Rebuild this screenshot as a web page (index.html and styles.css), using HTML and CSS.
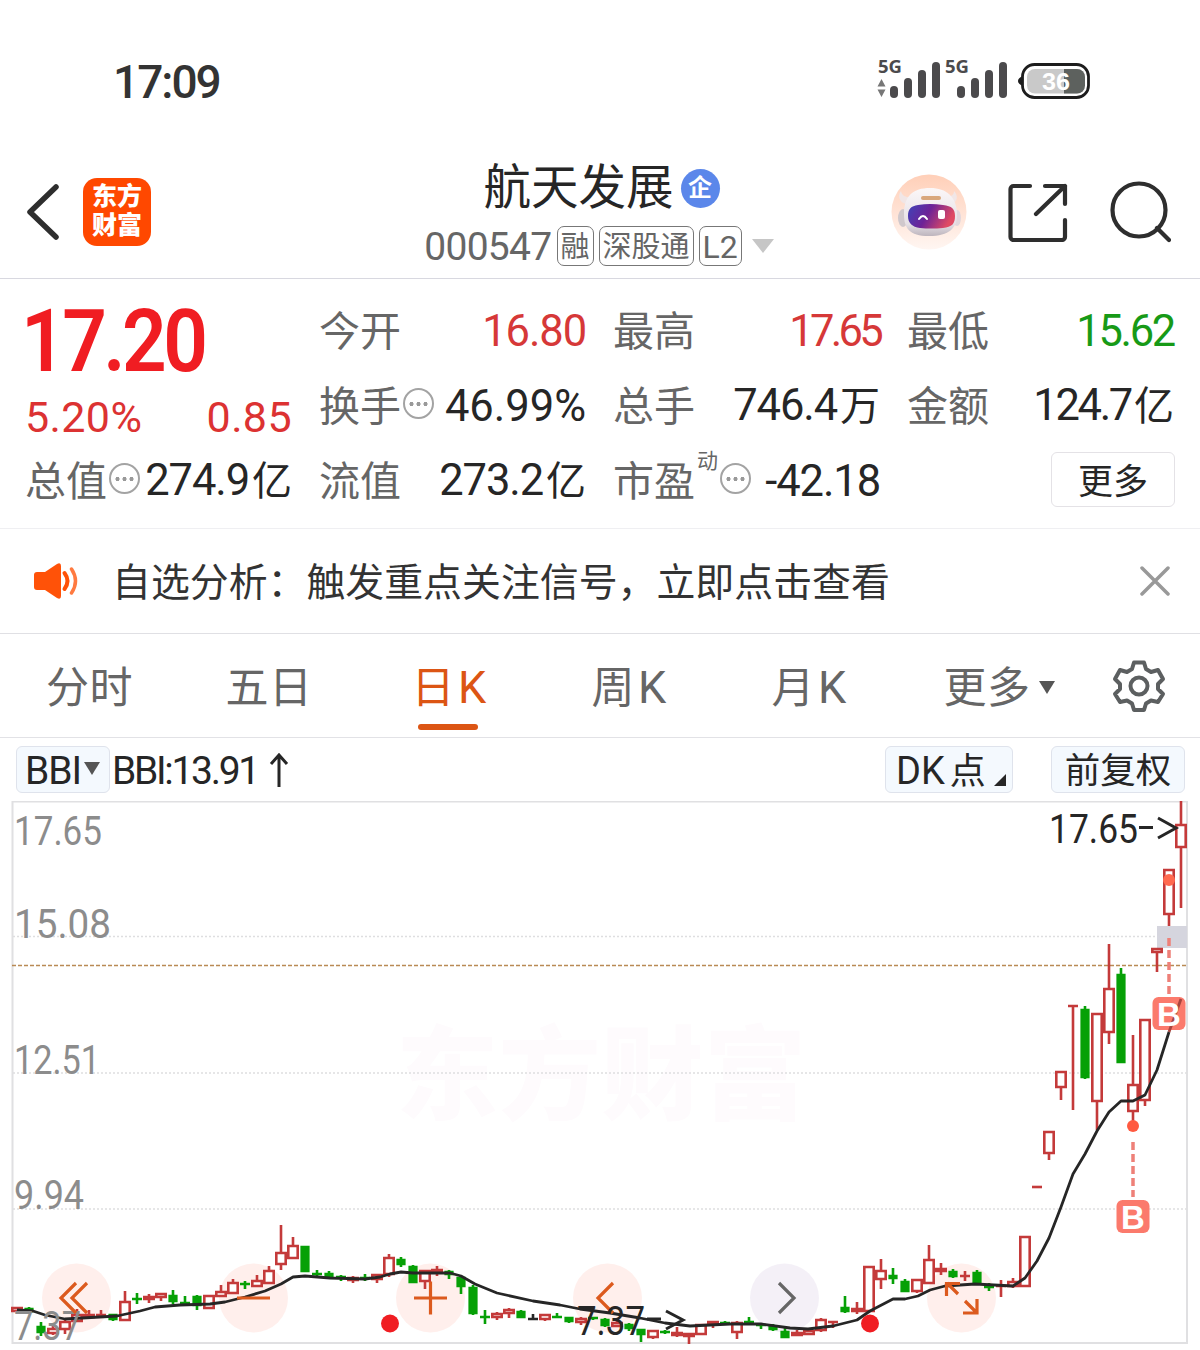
FILE: index.html
```html
<!DOCTYPE html>
<html lang="zh-CN">
<head>
    <meta charset="UTF-8">
    <meta name="viewport" content="width=device-width, initial-scale=1.0">
    <title>航天发展 000547</title>
    <link rel="stylesheet" href="styles.css">
</head>
<body>

<div class="status-bar">
    <span class="clock">17:09</span>
    <svg class="status-icons" width="220" height="50" viewBox="0 0 220 50">
        <g fill="#4b4a4c">
            <text x="8" y="23" class="net" textLength="24" lengthAdjust="spacingAndGlyphs">5G</text>
            <text x="75" y="23" class="net" textLength="24" lengthAdjust="spacingAndGlyphs">5G</text>
            <path d="M11.500 29l4 7.500h-8zM11.500 47l4-7.500h-8z" fill="#777"/>
            <rect x="20" y="36" width="8" height="12" rx="4"/>
            <rect x="34" y="28" width="8" height="20" rx="4"/>
            <rect x="48" y="20" width="8" height="28" rx="4"/>
            <rect x="62" y="12" width="8" height="36" rx="4"/>
            <rect x="87" y="36" width="8" height="12" rx="4"/>
            <rect x="101" y="28" width="8" height="20" rx="4"/>
            <rect x="115" y="20" width="8" height="28" rx="4"/>
            <rect x="129" y="12" width="8" height="36" rx="4"/>
        </g>
        <path d="M153 26q-5 2-5 5t5 5z" fill="#1d1d1d"/>
        <rect x="152.500" y="14.500" width="66" height="33" rx="12" fill="#fff" stroke="#1d1d1d" stroke-width="2.800"/>
        <rect x="157" y="19" width="58" height="24.500" rx="8" fill="#c9c9c9"/>
        <path d="M194 19h13a8 8 0 0 1 8 8v8.500a8 8 0 0 1-8 8h-13z" fill="#5d615e"/>
        <text x="172" y="39.500" class="battery" textLength="28" lengthAdjust="spacingAndGlyphs">36</text>
    </svg>
</div>

<header class="header">
    <div class="header-left">
        <svg width="36" height="60" viewBox="0 0 36 60">
            <path d="M32 5L6 30l26 25" fill="none" stroke="#2e2e2e" stroke-width="5.500" stroke-linecap="round" stroke-linejoin="round"/>
        </svg>
        <div class="logo"><span>东方</span><span>财富</span></div>
    </div>
    <div class="header-title">
        <div class="stock-name">航天发展<span class="badge">企</span></div>
        <div class="stock-code">
            <span class="code">000547</span>
            <span class="tag">融</span>
            <span class="tag tag-long">深股通</span>
            <span class="tag">L2</span>
            <span class="drop"></span>
        </div>
    </div>
    <div class="header-right">
        <svg width="76" height="76" viewBox="0 0 76 76">
            <defs>
                <linearGradient id="bg" x1="0" y1="0" x2="0" y2="1"><stop offset="0" stop-color="#ffcfb8"/><stop offset="1" stop-color="#fff6f2"/></linearGradient>
                <linearGradient id="visor" x1="0" y1="0" x2="1" y2=".3"><stop offset="0" stop-color="#3f43b8"/><stop offset=".5" stop-color="#6d2297"/><stop offset="1" stop-color="#e04a63"/></linearGradient>
                <linearGradient id="helmet" x1="0" y1="0" x2="0" y2="1"><stop offset="0" stop-color="#fbf7f8"/><stop offset=".75" stop-color="#e6e0e5"/><stop offset="1" stop-color="#bdb5bd"/></linearGradient>
            </defs>
            <circle cx="38" cy="38" r="37.500" fill="url(#bg)"/>
            <path d="M10 17c-4 5-1 12 5 13l6-7c-6 1-10-1-11-6zM63 17c5 5 3 12-3 13l-6-7c6 0 9-2 9-6z" fill="#f1e6e6"/>
            <ellipse cx="12" cy="44" rx="5" ry="9" fill="#d0c8cc"/>
            <ellipse cx="66" cy="44" rx="4" ry="8" fill="#e2d7dc"/>
            <path d="M13 40C13 22 22 14 39 14s26 9 27 25c1 15-8 23-28 23S13 54 13 40z" fill="url(#helmet)"/>
            <rect x="30" y="22" width="20" height="4" rx="2" fill="#d9a77c"/>
            <path d="M27 31q12-2 25 0c9 1 12 4 12 11 0 8-3 11-12 12q-12 1-23 0c-8-1-12-5-12-12s3-10 10-11z" fill="url(#visor)"/>
            <path d="M28 45q4-6 8 0" fill="none" stroke="#fff" stroke-width="2" stroke-linecap="round"/>
            <rect x="47" y="36" width="7" height="9" rx="2" fill="#fff"/>
        </svg>
        <svg width="60" height="60" viewBox="0 0 60 60" fill="none" stroke="#2e2e2e" stroke-width="4.200" stroke-linecap="round" stroke-linejoin="round">
            <path d="M22 4H5.500a3 3 0 0 0-3 3v48a3 3 0 0 0 3 3H54a3 3 0 0 0 3-3V38M37 4h20v18M57 4L28 32"/>
        </svg>
        <svg width="62" height="62" viewBox="0 0 62 62" fill="none" stroke="#2e2e2e" stroke-width="4.200" stroke-linecap="round">
            <circle cx="30" cy="29" r="26.500"/>
            <path d="M48 47l12 12"/>
        </svg>
    </div>
</header>

<section class="quote">
    <div class="price-box">
        <div class="price">17.20</div>
        <div class="change"><span>5.20%</span><span>0.85</span></div>
    </div>
    <div class="stat"><span class="label">今开</span><span class="value red">16.80</span></div>
    <div class="stat"><span class="label">最高</span><span class="value red kern">17.65</span></div>
    <div class="stat"><span class="label">最低</span><span class="value green tight">15.62</span></div>
    <div class="stat"><span class="label">换手</span><span class="info"></span><span class="value wide">46.99%</span></div>
    <div class="stat"><span class="label">总手</span><span class="value">746.4<i>万</i></span></div>
    <div class="stat"><span class="label">金额</span><span class="value tight">124.7<i>亿</i></span></div>
    <div class="stat"><span class="label">总值</span><span class="info"></span><span class="value">274.9<i>亿</i></span></div>
    <div class="stat"><span class="label">流值</span><span class="value">273.2<i>亿</i></span></div>
    <div class="stat"><span class="label">市盈</span><sup>动</sup><span class="info"></span><span class="value">-42.18</span></div>
    <div class="stat"><button class="more-btn">更多</button></div>
</section>

<div class="notice">
    <svg width="46" height="40" viewBox="0 0 46 40">
        <path d="M1 14q0-3 3-3h8L24 3q4-2 4 2v30q0 4-4 2l-12-8H4q-3 0-3-3z" fill="#ff5208"/>
        <path d="M31.500 12q6 8 0 16" fill="none" stroke="#ff5208" stroke-width="4" stroke-linecap="round"/>
        <path d="M38.500 8q8 12 0 24" fill="none" stroke="#ff7a40" stroke-width="3.500" stroke-linecap="round"/>
    </svg>
    <span class="notice-text">自选分析：触发重点关注信号，立即点击查看</span>
    <svg width="30" height="30" viewBox="0 0 30 30">
        <path d="M2 2l26 26M28 2L2 28" stroke="#999" stroke-width="3.500" stroke-linecap="round"/>
    </svg>
</div>

<nav class="tabs">
    <span class="tab">分时</span>
    <span class="tab">五日</span>
    <span class="tab active">日<i>K</i></span>
    <span class="tab">周<i>K</i></span>
    <span class="tab">月<i>K</i></span>
    <span class="tab tab-more">更多<b class="caret"></b></span>
    <svg class="gear" width="54" height="54" viewBox="0 0 54 54" fill="none" stroke="#5c5f60" stroke-width="4" stroke-linejoin="round">
        <path d="M22 3.500h10l2 6.500 5 3 7-2 5 9-5 5v5l5 5-5 8-7-1.500-5 3-2 6.500H22l-2-6.500-5-3-7 1.500-5-8 5-5v-5l-5-5 5-9 7 2 5-3z"/>
        <circle cx="27" cy="27" r="8.500"/>
    </svg>
</nav>

<div class="toolbar">
    <span class="chip bbi">BBI<b class="caret"></b></span>
    <span class="bbi-value">BBI:13.91<svg width="20" height="36" viewBox="0 0 20 36"><path d="M10 34V3M2 11l8-9 8 9" fill="none" stroke="#262626" stroke-width="3"/></svg></span>
    <span class="chip dk">DK<i>点</i><b class="corner"></b></span>
    <span class="chip fq">前复权</span>
</div>

<svg class="chart" id="chart" width="1200" height="549" viewBox="0 801 1200 549">
    <text class="watermark" x="396" y="1112" textLength="410">东方财富</text>
    <g class="frame">
        <path d="M12.500 801.500H1187V1343H12.500z"/>
        <path class="dots" d="M13 936.500H1187M13 1073H1187M13 1209H1187"/>
        <path class="cost" d="M12 965.500H1187"/>
    </g>
    <rect x="1157" y="926" width="30" height="22" fill="#d5d5de"/>

    <g class="round-buttons">
        <circle cx="76.500" cy="1298" r="34.500"/>
        <circle cx="253.500" cy="1298" r="34.500"/>
        <circle cx="430.500" cy="1298" r="34.500"/>
        <circle cx="607.500" cy="1298" r="34.500"/>
        <circle class="gray" cx="784.500" cy="1298" r="34.500"/>
        <circle cx="961.500" cy="1298" r="34.500"/>
    </g>

    <g id="candles"></g>

    <g id="signals">
        <path class="signal-line" d="M1169 938V994M1133 1142V1197"/>
        <circle cx="1169" cy="880" r="6" fill="#ff6a50"/>
        <circle cx="1133" cy="1126" r="6" fill="#ff5a40"/>
        <rect x="1152.500" y="997" width="33" height="33" rx="6" fill="#fb7a6c"/>
        <rect x="1116.500" y="1200" width="33" height="33" rx="6" fill="#fb7a6c"/>
        <path class="bbi-fade" d="M1169 1032L1181 999"/>
        <text class="b" x="1169" y="1025.500">B</text>
        <text class="b" x="1133" y="1228.500">B</text>
    </g>

    <path id="bbi" class="bbi-line"/>
    <circle cx="390" cy="1323.500" r="9" fill="#f01d22"/>
    <circle cx="870" cy="1323.500" r="9" fill="#f01d22"/>

    <g class="axis">
        <text x="14" y="845" textLength="88" lengthAdjust="spacingAndGlyphs">17.65</text>
        <text x="14" y="938" textLength="97" lengthAdjust="spacingAndGlyphs">15.08</text>
        <text x="14" y="1074" textLength="86" lengthAdjust="spacingAndGlyphs">12.51</text>
        <text x="14" y="1209" textLength="70" lengthAdjust="spacingAndGlyphs">9.94</text>
        <text x="14" y="1340" textLength="67" lengthAdjust="spacingAndGlyphs">7.37</text>
    </g>
    <g class="round-icons">
        <path d="M76 1283L61 1298l15 15M87 1283L72 1298l15 15"/>
        <path d="M237 1298h33"/>
        <path d="M414 1298h33M430.500 1281.500v33"/>
        <path d="M613 1283l-15 15 15 15"/>
        <path class="gray" d="M779 1283l15 15-15 15"/>
        <path d="M958 1294l-11-11M946.500 1296v-12.500H960M965 1301l11 11M963 1313h14v-14"/>
    </g>
    <text class="extreme" x="1049" y="843" textLength="89" lengthAdjust="spacingAndGlyphs">17.65</text>
    <path class="extreme-arrow" d="M1139 827.500h14M1158 818l18 10-18 10"/>
    <text class="extreme" x="577" y="1335" textLength="68" lengthAdjust="spacingAndGlyphs">7.37</text>
    <path class="extreme-arrow" d="M647 1319h14M666 1311l17 9-17 9"/>
</svg>

<script src="script.js"></script>
</body>
</html>
```

FILE: styles.css
```css
* {
    box-sizing: border-box;
}
body {
    margin: 0;
    width: 1200px;
    height: 1350px;
    overflow: hidden;
    background-color: #fff;
    color: #262626;
    font-family: Roboto, "Noto Sans CJK SC", sans-serif;
}
svg {
    display: block;
    flex: none;
}
i {
    font-style: normal;
}
.status-bar {
    height: 150px;
    padding: 50px 110px 0 113px;
    display: flex;
    justify-content: space-between;
}
.clock {
    font-size: 46px;
    font-weight: 500;
    line-height: 64px;
    letter-spacing: -2px;
    color: #333;
}
.net {
    font: bold 17.5px "Open Sans", sans-serif;
}
.battery {
    font: bold 24px "Liberation Sans", sans-serif;
    fill: #fff;
}
.header {
    height: 129px;
    display: flex;
    justify-content: space-between;
    padding: 0 29px 0 24px;
    border-bottom: 1.5px solid #d8d8e0;
}
.header-left {
    display: flex;
    align-items: center;
    gap: 23px;
    padding-bottom: 5px;
}
.logo {
    width: 68px;
    height: 68px;
    border-radius: 14px;
    background-color: #ff4800;
    color: #fff;
    font-size: 25px;
    font-weight: 900;
    line-height: 29px;
    padding-top: 4px;
    display: flex;
    flex-direction: column;
    align-items: center;
}
.header-title {
    display: flex;
    flex-direction: column;
    align-items: center;
    width: 360px;
    margin-left: 156px;
}
.stock-name {
    display: flex;
    align-items: center;
    gap: 7px;
    font-size: 47.5px;
    line-height: 76px;
    height: 76px;
    margin-left: 5px;
}
.badge {
    width: 39px;
    height: 39px;
    border-radius: 50%;
    background-color: #5b87ea;
    color: #fff;
    font-size: 24px;
    font-weight: bold;
    line-height: 38px;
    text-align: center;
}
.stock-code {
    display: flex;
    align-items: center;
    gap: 5px;
    height: 40px;
    color: #666;
}
.code {
    font-size: 39px;
    letter-spacing: -0.7px;
    padding-top: 2px;
}
.tag {
    height: 40px;
    border: 1.5px solid #777;
    border-radius: 7px;
    padding: 0 3px;
    font-size: 29px;
    line-height: 40px;
}
.tag:nth-child(4) {
    font-size: 32px;
}
.drop {
    margin-left: 5px;
    border: 11px solid transparent;
    border-top: 14px solid #c6c6c6;
    border-bottom: 0;
}
.header-right {
    display: flex;
    align-items: center;
    gap: 41px;
    padding-bottom: 5px;
}
.quote {
    height: 250px;
    padding: 15px 26px 0 25px;
    display: grid;
    grid-template-columns: repeat(4, 267px);
    grid-template-rows: repeat(3, 75px);
    column-gap: 27px;
    border-bottom: 1.5px solid #efeff2;
}
.price-box {
    grid-row: span 2;
    color: #dc3232;
}
.price {
    height: 93px;
    font-size: 88px;
    font-weight: 600;
    line-height: 93px;
    letter-spacing: -4px;
    transform: scaleX(0.89);
    transform-origin: left;
    margin-left: -4px;
    color: #f01d22;
}
.change {
    display: flex;
    justify-content: space-between;
    font-size: 43px;
    line-height: 60px;
    letter-spacing: 0.4px;
}
.stat {
    display: flex;
    align-items: center;
    min-width: 0;
    height: 75px;
    line-height: 60px;
    white-space: nowrap;
}
.label {
    font-size: 41px;
    color: #666;
}
.value {
    margin-left: auto;
    font-size: 43.5px;
    letter-spacing: -1.1px;
}
.value i {
    font-size: 40px;
    letter-spacing: 0;
    margin-left: 3px;
}
.wide {
    letter-spacing: 0;
}
.tight {
    letter-spacing: -2.3px;
}
.kern {
    letter-spacing: -3.7px;
}
.red {
    color: #d63838;
}
.green {
    color: #179a17;
}
.info {
    flex: none;
    width: 31px;
    height: 31px;
    margin: -6px 0 0 2px;
    border: 2.5px solid #a3a3a3;
    border-radius: 50%;
    background: radial-gradient(circle, #999 1.8px, transparent 2.3px) center / 7px 26px repeat-x;
    background-clip: content-box;
    padding: 0 2px;
}
sup {
    font-size: 21px;
    line-height: 24px;
    color: #666;
    margin: -42px 0 0 2px;
}
.more-btn {
    margin: -5px -1px 0 auto;
    width: 124px;
    height: 55px;
    border: 1.5px solid #e4e2e6;
    border-radius: 6px;
    background-color: #fff;
    font: 35px/48px "Noto Sans CJK SC", sans-serif;
    color: #262626;
    padding: 0;
}
.notice {
    height: 105px;
    border-bottom: 1.5px solid #e0e0e4;
    padding: 0 30px 0 33px;
    display: flex;
    align-items: center;
}
.notice-text {
    flex: 1;
    margin-left: 33px;
    padding-top: 3px;
    font-size: 38.9px;
    line-height: 60px;
    color: #333;
}
.tabs {
    height: 104px;
    border-bottom: 1.5px solid #e2e2e6;
    display: grid;
    grid-template-columns: 179px 180px 180px 180px 180px 200px 1fr;
    align-items: center;
    text-align: center;
    color: #666;
    font-size: 43px;
}
.tab {
    height: 102px;
    line-height: 106px;
    letter-spacing: 0.5px;
}
.tab i {
    font-size: 45px;
    margin-left: 3px;
}
.active {
    color: #dc5514;
    position: relative;
}
.active::after {
    content: "";
    position: absolute;
    left: 59px;
    bottom: 7px;
    width: 60px;
    height: 6px;
    border-radius: 3px;
    background-color: #dc5514;
}
.caret {
    display: inline-block;
    border: 8px solid transparent;
    border-top: 13px solid #555;
    border-bottom: 0;
}
.tab-more .caret {
    margin-left: 8px;
    margin-bottom: 9px;
}
.gear {
    margin-left: 13px;
}
.toolbar {
    height: 63px;
    padding: 0 15px 0 16px;
    display: flex;
    align-items: center;
    font-size: 39px;
}
.chip {
    height: 47px;
    border: 1.5px solid #dfe3ec;
    border-radius: 6px;
    background-color: #f4f9fe;
    line-height: 48px;
    white-space: nowrap;
}
.bbi {
    width: 94px;
    padding-left: 8px;
    letter-spacing: -1px;
}
.bbi .caret {
    margin: 0 0 9px 3px;
}
.bbi-value {
    display: flex;
    align-items: center;
    gap: 11px;
    margin-left: 2px;
    padding-top: 2px;
    letter-spacing: -2.3px;
}
.dk {
    position: relative;
    width: 128px;
    padding-left: 10px;
    margin-left: auto;
    font-size: 38px;
}
.dk i {
    font-size: 36px;
    margin-left: 5px;
}
.corner {
    position: absolute;
    right: 6px;
    bottom: 6px;
    border-left: 12px solid transparent;
    border-bottom: 12px solid #262626;
}
.fq {
    width: 134px;
    margin-left: 38px;
    text-align: center;
    font-size: 35.5px;
}
.watermark {
    font: 900 102px "Noto Sans CJK SC", sans-serif;
    fill: #fefbfd;
}
.frame path {
    fill: none;
    stroke: #e0e0e2;
    stroke-width: 2;
}
.frame .dots {
    stroke: #dedee0;
    stroke-width: 1.5;
    stroke-dasharray: 2 2;
}
.frame .cost {
    stroke: #b98a54;
    stroke-width: 1.6;
    stroke-dasharray: 4 2;
}
.up {
    stroke: #c43a3a;
    stroke-width: 2.6;
    fill: #fff;
}
.down {
    stroke: #06a006;
    stroke-width: 2.6;
    fill: #06a006;
}
.flat {
    stroke: #262626;
    stroke-width: 2.6;
    fill: #262626;
}
.signal-line {
    stroke: #ee8078;
    stroke-width: 3.5;
    stroke-dasharray: 8 4;
}
.b {
    font: bold 33px "Liberation Sans", sans-serif;
    fill: #fff;
    text-anchor: middle;
}
.round-buttons circle {
    fill: rgba(255, 80, 40, 0.09);
}
.round-buttons .gray {
    fill: rgba(110, 70, 150, 0.08);
}
.round-icons path {
    fill: none;
    stroke: #dc5a1e;
    stroke-width: 3.2;
}
.round-icons .gray {
    stroke: #666;
}
.bbi-line {
    fill: none;
    stroke: #262626;
    stroke-width: 2.8;
    stroke-linejoin: round;
}
.bbi-fade {
    stroke: #a8453f;
    stroke-width: 2.8;
}
.axis text {
    font-size: 41.5px;
    fill: #8c8c8c;
}
.extreme {
    font-size: 41px;
    fill: #262626;
}
.extreme-arrow {
    fill: none;
    stroke: #262626;
    stroke-width: 3;
}
```

FILE: script.js
```javascript
// [type, high, body top, body bottom, low], one candle every 12px
const candles = [
    ['up', 1308, 1308, 1311, 1311], ['down', 1307, 1309, 1311, 1312], ['down', 1322, 1327, 1332, 1336],
    ['up', 1326, 1329, 1333, 1335], ['up', 1320, 1322, 1329, 1334], ['up', 1309, 1315, 1321, 1322],
    ['up', 1310, 1315, 1317, 1318], ['up', 1310, 1315, 1316, 1317], ['down', 1314, 1315, 1319, 1321],
    ['up', 1291, 1302, 1320, 1320], ['down', 1293, 1299, 1299, 1304], ['up', 1294, 1297, 1299, 1303],
    ['up', 1293, 1294, 1297, 1301], ['down', 1290, 1296, 1301, 1304], ['down', 1296, 1303, 1304, 1305],
    ['down', 1295, 1297, 1305, 1310], ['up', 1295, 1296, 1308, 1308], ['up', 1285, 1292, 1296, 1296],
    ['up', 1279, 1283, 1293, 1293], ['down', 1281, 1284, 1284, 1289], ['up', 1275, 1281, 1286, 1286],
    ['up', 1266, 1271, 1283, 1283], ['up', 1225, 1253, 1264, 1270], ['up', 1237, 1246, 1258, 1259],
    ['down', 1246, 1247, 1271, 1272], ['down', 1270, 1274, 1275, 1277], ['down', 1271, 1274, 1277, 1277],
    ['down', 1275, 1277, 1278, 1281], ['up', 1276, 1278, 1280, 1283], ['down', 1274, 1278, 1279, 1281],
    ['up', 1274, 1275, 1279, 1283], ['up', 1254, 1258, 1274, 1277], ['down', 1257, 1260, 1264, 1267],
    ['down', 1265, 1267, 1282, 1283], ['up', 1270, 1271, 1281, 1289], ['up', 1266, 1270, 1272, 1276],
    ['down', 1270, 1272, 1274, 1279], ['down', 1276, 1278, 1286, 1294], ['down', 1285, 1288, 1313, 1315],
    ['down', 1310, 1317, 1317, 1324], ['up', 1312, 1314, 1317, 1320], ['up', 1308, 1310, 1313, 1318],
    ['down', 1310, 1312, 1317, 1318], ['flat', 1314, 1319, 1319, 1319], ['up', 1314, 1315, 1319, 1321],
    ['down', 1313, 1317, 1317, 1317], ['down', 1317, 1318, 1321, 1323], ['up', 1317, 1319, 1322, 1325],
    ['down', 1317, 1318, 1319, 1320], ['down', 1318, 1320, 1325, 1327], ['up', 1321, 1323, 1326, 1326],
    ['down', 1323, 1325, 1328, 1331], ['down', 1329, 1330, 1334, 1342], ['up', 1330, 1331, 1337, 1339],
    ['down', 1330, 1332, 1332, 1334], ['up', 1327, 1333, 1335, 1337], ['up', 1333, 1334, 1336, 1344],
    ['up', 1325, 1325, 1334, 1334], ['up', 1321, 1322, 1324, 1328], ['down', 1321, 1323, 1324, 1324],
    ['up', 1321, 1323, 1332, 1339], ['down', 1317, 1322, 1323, 1325], ['down', 1324, 1325, 1326, 1329],
    ['down', 1324, 1327, 1329, 1331], ['down', 1326, 1332, 1337, 1338], ['up', 1330, 1333, 1335, 1336],
    ['up', 1330, 1331, 1334, 1334], ['up', 1318, 1320, 1330, 1332], ['up', 1321, 1322, 1322, 1328],
    ['down', 1296, 1308, 1311, 1313], ['up', 1302, 1309, 1311, 1314], ['up', 1266, 1267, 1311, 1311],
    ['up', 1259, 1271, 1279, 1289], ['down', 1268, 1276, 1278, 1284], ['down', 1279, 1282, 1291, 1292],
    ['up', 1279, 1280, 1291, 1293], ['up', 1245, 1260, 1283, 1283], ['up', 1263, 1269, 1271, 1275],
    ['down', 1269, 1272, 1276, 1278], ['up', 1271, 1276, 1276, 1281], ['down', 1270, 1273, 1282, 1282],
    ['down', 1283, 1287, 1287, 1291], ['up', 1280, 1286, 1287, 1297], ['up', 1278, 1282, 1286, 1288],
    ['up', 1237, 1237, 1286, 1286], ['up', 1187, 1187, 1187, 1187], ['up', 1132, 1132, 1153, 1160],
    ['up', 1071, 1072, 1087, 1100], ['up', 1006, 1006, 1006, 1110], ['down', 1006, 1010, 1077, 1079],
    ['up', 1013, 1014, 1101, 1130], ['up', 944, 989, 1032, 1044], ['down', 968, 975, 1062, 1062],
    ['up', 1035, 1085, 1111, 1128], ['up', 1019, 1020, 1100, 1106], ['up', 948, 949, 952, 972],
    ['up', 870, 870, 914, 926], ['up', 801, 825, 847, 908]
];

const bbi = [
    [17, 1310], [33, 1311], [45, 1315], [65, 1319], [117, 1316], [140, 1311], [155, 1307], [180, 1305],
    [210, 1304], [225, 1302], [245, 1297], [265, 1291], [281, 1284], [293, 1277], [305, 1276], [330, 1278],
    [365, 1279], [380, 1277], [390, 1274], [401, 1272], [413, 1273], [450, 1273], [461, 1276], [475, 1284],
    [497, 1293], [533, 1301], [560, 1305], [580, 1309], [610, 1313], [640, 1318], [665, 1323], [690, 1326],
    [730, 1324], [761, 1324], [790, 1328], [808, 1329], [833, 1326], [857, 1320], [870, 1311], [893, 1299],
    [905, 1299], [918, 1296], [930, 1290], [945, 1286], [975, 1284], [1013, 1286], [1025, 1278], [1037, 1261],
    [1049, 1238], [1061, 1207], [1073, 1174], [1085, 1154], [1097, 1131], [1109, 1112], [1121, 1101],
    [1133, 1101], [1145, 1095], [1157, 1070], [1169, 1032]
];

let html = '';
candles.forEach(function(c, i) {
    const x = 17 + i * 12;
    const half = c[0] === 'up' ? 4.7 : 3.3;
    let d = `M${x} ${c[1]}V${c[2]}M${x} ${c[3]}V${c[4]}`;
    if (c[3] - c[2] < 2) {
        d += `M${x - 5} ${c[2]}h10`;
    } else {
        d += `M${x - half} ${c[2]}h${half * 2}V${c[3]}h${-half * 2}z`;
    }
    html += `<path class="${c[0]}" d="${d}"/>`;
});
document.getElementById('candles').innerHTML = html;
document.getElementById('bbi').setAttribute('d', 'M' + bbi.join('L'));
```
